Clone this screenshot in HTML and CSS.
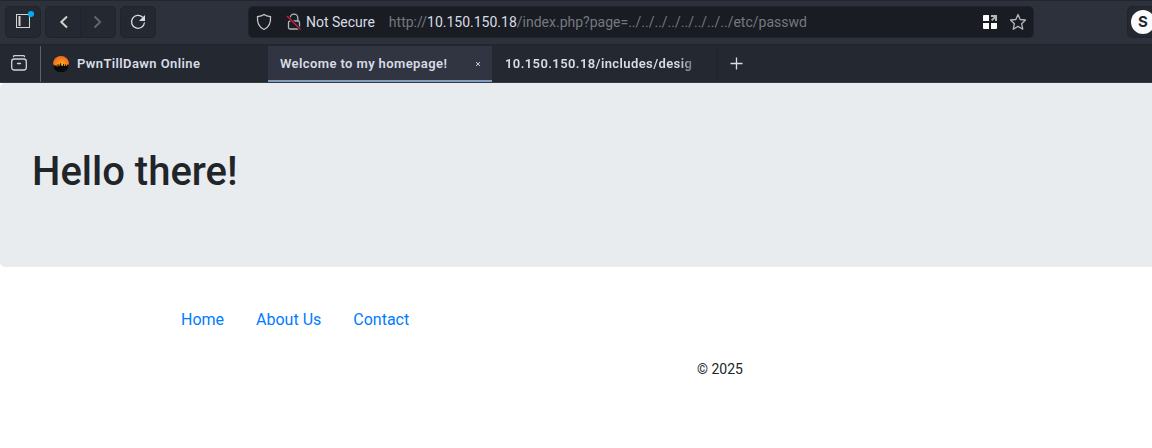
FILE: index.html
```html
<!DOCTYPE html>
<html lang="en">
<head>
<meta charset="utf-8">
<title>Welcome to my homepage!</title>
<link rel="stylesheet" href="styles.css">
</head>
<body>
<div class="toolbar">
  <div class="tool sidebar-tool">
    <svg width="20" height="20" viewBox="0 0 20 20" fill="none"><rect x="2.5" y="4.5" width="13" height="13" stroke="#d2d2cf"/><path d="M5.500 6v10" stroke="#d2d2cf" stroke-width="2"/><circle cx="17" cy="4" r="3.1" fill="#00aef5"/></svg>
  </div>
  <div class="tool-group">
    <div class="tool"><svg width="16" height="16" viewBox="0 0 16 16" fill="none" stroke="#d2d2cf" stroke-width="2"><path d="M12 2.500 6.300 8l5.700 5.500"/></svg></div>
    <div class="tool"><svg width="16" height="16" viewBox="0 0 16 16" fill="none" stroke="#62656c" stroke-width="2"><path d="M4.500 2.500 10.200 8 4.500 13.500"/></svg></div>
  </div>
  <div class="tool reload-tool">
    <svg width="16" height="16" viewBox="0 0 16 16" fill="none"><path d="M12.700 3.300A6.500 6.500 0 1 0 14.500 8.500" stroke="#d8dce6" stroke-width="1.300"/><path d="M15 1v6H9z" fill="#d8dce6"/></svg>
  </div>
  <div class="urlbar">
    <svg class="shield" width="16" height="18" viewBox="0 0 16 18" fill="none" stroke="#c2c5cb" stroke-width="1.300"><path d="M8 1.500C6.200 3 3.700 3.500 1.500 3.600 1 9.700 2.600 14 8 16.500 13.400 14 15 9.700 14.500 3.600 12.300 3.500 9.800 3 8 1.500z"/></svg>
    <svg class="lock" width="16" height="18" viewBox="0 0 16 18" fill="none"><g stroke="#b4b7bd" stroke-width="1.300"><path d="M4.200 8V5a3.800 3.800 0 0 1 7.600 0v3"/><rect x="2.500" y="8" width="11" height="8" rx="1.500"/></g><path d="M1 3l13.500 13.500" stroke="#191c23" stroke-width="3"/><path d="M1 3l13.500 13.500" stroke="#d5203f" stroke-width="1.200"/></svg>
    <span class="security">Not Secure</span>
    <span class="url">http://<b>10.150.150.18</b>/index.php?page=../../../../../../../../etc/passwd</span>
    <svg class="apps" width="14" height="14" viewBox="0 0 14 14"><path d="M0 1a1 1 0 0 1 1-1h5v6H0zM0 8h6v6H1a1 1 0 0 1-1-1zM8 8h6v5a1 1 0 0 1-1 1H8z" fill="#fff"/><path d="M8 0h6v6h-2V3.400L9.300 6.100 8 4.800 10.800 2H8z" fill="#b5b5b3"/></svg>
    <svg class="star" width="18" height="18" viewBox="0 0 18 18" fill="none" stroke="#b4b7bd" stroke-width="1.300" stroke-linejoin="round"><path d="M9 1.500 11.200 6.500 16.500 7 12.600 10.700 13.800 16.200 9 13.400 4.200 16.200 5.400 10.700 1.500 7 6.800 6.500z"/></svg>
  </div>
  <div class="tool account"><span class="avatar">S</span></div>
</div>
<div class="tabs">
  <div class="archive">
    <svg width="18" height="18" viewBox="0 0 18 18" fill="none" stroke="#d0d2d9" stroke-width="1.300" stroke-linecap="round"><path d="M3.500 2.500Q3.700 1.700 4.500 1.700h9q.8 0 1 .8M7.500 9.500h3"/><rect x="1.700" y="5" width="14.600" height="11" rx="2.500"/></svg>
  </div>
  <div class="tab first-tab">
    <svg class="favicon" width="16" height="16" viewBox="0 0 16 16"><defs><radialGradient id="sun" cx=".5" cy=".55" r=".5"><stop offset="0" stop-color="#ffb21c"/><stop offset="1" stop-color="#f36c1d"/></radialGradient></defs><circle cx="8" cy="8" r="8" fill="url(#sun)"/><path d="M0 8.500 1.500 9v1h1V9h1v1.500h1V8.300h1V10h1V8.500h.8V7h.8v2.500h1V10h1V8h1v2h1V8.500h1V10h1V8.800L16 8.500A8 8 0 0 1 0 8.500z" fill="#090a0b"/></svg>
    <span class="tab-title">PwnTillDawn Online</span>
  </div>
  <div class="tab active">
    <span class="tab-title">Welcome to my homepage!</span>
    <svg class="close" width="6" height="6" viewBox="0 0 6 6" stroke="#c8ccd4"><path d="M1 1l4 4M5 1 1 5"/></svg>
  </div>
  <div class="tab last-tab"><span class="tab-title faded">10.150.150.18/includes/desig</span></div>
  <div class="new-tab"><svg width="14" height="14" viewBox="0 0 14 14" stroke="#d8dce6" stroke-width="1.300"><path d="M7.500 .5v12M1.500 6.500h12"/></svg></div>
</div>
<main class="page">
  <header class="hero"><h1>Hello there!</h1></header>
  <nav class="links"><a href="#">Home</a><a href="#">About Us</a><a href="#">Contact</a></nav>
  <footer class="footer">© 2025</footer>
</main>
</body>
</html>
```
FILE: styles.css
```css
* { box-sizing: border-box; }
body {
  margin: 0;
  width: 1152px;
  height: 448px;
  overflow: hidden;
  background: #fff;
  font-family: Roboto, "Liberation Sans", sans-serif;
}
svg { display: block; flex: none; }
.toolbar {
  display: flex;
  align-items: flex-start;
  height: 45px;
  padding: 5px 0 0 5px;
  border-top: 1px solid #22262f;
  border-bottom: 1px solid #20242b;
  background: #2c313c;
}
.tool {
  display: flex;
  align-items: center;
  justify-content: center;
  flex: none;
  width: 36px;
  height: 32px;
  border: 1px solid #20242a;
  border-radius: 5px;
  background: #242830;
}
.sidebar-tool svg { margin: -5px 0 0 1px; }
.tool-group { display: flex; margin: 0 4px; }
.tool-group .tool:first-child { border-radius: 5px 0 0 5px; }
.tool-group .tool:last-child { width: 35px; padding-right: 1px; border-left: 0; border-radius: 0 5px 5px 0; }
.urlbar {
  display: flex;
  align-items: center;
  flex: none;
  width: 786px;
  height: 32px;
  margin-left: 92px;
  padding-left: 7px;
  border: 1px solid #20232b;
  border-radius: 5px;
  background: #191c23;
  color: #757880;
  font-size: 14px;
  white-space: nowrap;
}
.lock { margin-left: 14px; }
.security { margin-left: 4px; color: #d8dce6; }
.url { width: 580px; margin-left: 14px; }
.url b { color: #d8dce6; font-weight: 400; }
.apps { margin-left: 14px; }
.star { margin-left: 12px; }
.account { margin-left: 93px; justify-content: flex-start; padding-left: 3px; }
.avatar {
  flex: none;
  width: 24px;
  height: 24px;
  border-radius: 50%;
  background: #fbfbfe;
  color: #23262e;
  font: 700 15px/24px Inter, sans-serif;
  text-align: center;
}
.tabs {
  display: flex;
  height: 38px;
  border-bottom: 1px solid #353941;
  background: #242830;
}
.archive {
  display: flex;
  align-items: center;
  width: 41px;
  margin-top: 1px;
  padding: 0 0 2px 10px;
  border-right: 1px solid #5f6269;
}
.tab {
  display: flex;
  align-items: center;
  flex: none;
  height: 37px;
  color: #d8dce6;
  font-size: 13px;
  font-weight: 600;
  letter-spacing: .4px;
  white-space: nowrap;
}
.first-tab { width: 227px; padding-left: 12px; }
.favicon { margin-right: 8px; }
.active {
  width: 224px;
  margin-top: 1px;
  height: 36px;
  padding: 1px 11px 0 12px;
  border-bottom: 2px solid #819dc2;
  background: #303541;
}
.close { margin-left: auto; }
.last-tab { width: 226px; padding-left: 13px; border-right: 1px solid #20232a; }
.faded {
  -webkit-mask-image: linear-gradient(to right, #000 174px, transparent 196px);
  mask-image: linear-gradient(to right, #000 174px, transparent 196px);
}
.new-tab { display: flex; align-items: center; margin-left: 11px; }
.page { width: 1160px; }
.hero {
  height: 184px;
  padding: 65px 32px 0;
  border-radius: 5px;
  background: #e9ecef;
}
.hero h1 { margin: 0; color: #212529; font-size: 40px; line-height: 48px; font-weight: 500; }
.links { display: flex; gap: 32px; padding: 41px 0 0 181px; }
.links a { color: #007bff; font-size: 16px; line-height: 24px; text-decoration: none; }
.footer { padding: 27px 0 0 697px; color: #212529; font-size: 14px; line-height: 21px; }
```
